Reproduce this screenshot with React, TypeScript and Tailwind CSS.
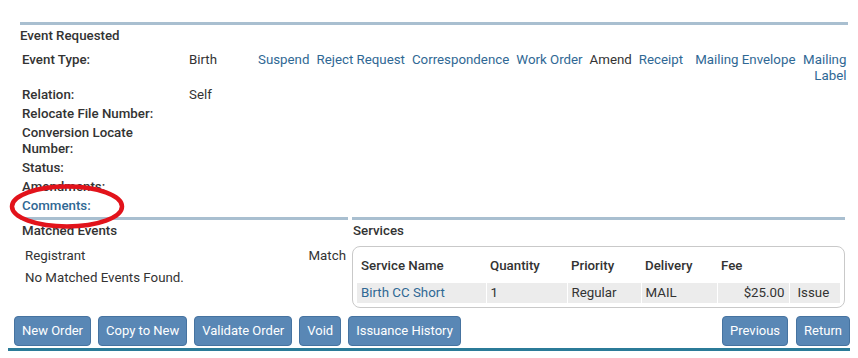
const font = { fontFamily: "Roboto, 'Open Sans', sans-serif" };

function Field({ label, children, link = false }: { label: string; children?: React.ReactNode; link?: boolean }) {
  return (
    <div className="flex">
      <div className={`w-[167px] pr-6 font-medium ${link ? "text-[#2f6894]" : "text-[#333]"}`}>{label}</div>
      <div className="w-[69px]">{children}</div>
    </div>
  );
}

function Btn({ children }: { children: React.ReactNode }) {
  return (
    <button className="h-[30px] rounded-[4px] border border-[#4673a0] bg-[#5987b5] px-[7px] text-[13px] text-white">
      {children}
    </button>
  );
}

export default function App() {
  const links = ["Suspend", "Reject Request", "Correspondence", "Work Order"];
  return (
    <div className="relative h-[358px] w-[858px] overflow-hidden bg-white text-[13.3px] leading-[16px] text-[#333]" style={font}>
      <div className="pt-[22px]">
        <div className="ml-[20px] mr-[10px] border-t-[3px] border-[#a9bfd0] pt-[3px]">
          <div className="font-medium">Event Requested</div>
          <div className="mt-[8px] flex flex-col gap-[3px] pl-[2px]">
            <div className="flex">
              <div className="w-[167px] shrink-0 font-medium">Event Type:</div>
              <div className="w-[69px] shrink-0">Birth</div>
              <div className="flex flex-1 items-start gap-[7px] whitespace-nowrap">
                {links.map((l) => (
                  <span key={l} className="shrink-0 text-[#2f6894]">{l}</span>
                ))}
                <span className="shrink-0">Amend</span>
                <span className="mr-[5px] shrink-0 text-[#2f6894]">Receipt</span>
                <span className="shrink-0 text-[#2f6894]">Mailing Envelope</span>
                <span className="w-[44px] shrink-0 whitespace-normal text-right text-[#2f6894]">Mailing Label</span>
              </div>
            </div>
            <Field label="Relation:">Self</Field>
            <Field label="Relocate File Number:" />
            <Field label="Conversion Locate Number:" />
            <Field label="Status:" />
            <Field label="Amendments:" />
            <Field label="Comments:" link />
          </div>
        </div>

        <div className="mt-[3px] flex gap-[4px] pl-[20px] pr-[13px]">
          <div className="w-[328px] border-t-[3px] border-[#a9bfd0] pt-[3px]">
            <div className="pl-[2px] font-medium">Matched Events</div>
            <div className="mt-[9px] flex justify-between pl-[5px] pr-[2px]">
              <span>Registrant</span>
              <span>Match</span>
            </div>
            <div className="mt-[6px] pl-[5px]">No Matched Events Found.</div>
          </div>
          <div className="flex-1 border-t-[3px] border-[#a9bfd0] pt-[3px]">
            <div className="pl-[1px] font-medium">Services</div>
            <div className="mt-[7px] rounded-[8px] border border-[#c9c9c9] px-[4px] pb-[4px] pt-[11px]">
              <table className="w-full border-collapse">
                <thead>
                  <tr className="text-left">
                    <th className="w-[129px] px-[4px] pb-[9px] font-medium">Service Name</th>
                    <th className="w-[81px] px-[4px] pb-[9px] font-medium">Quantity</th>
                    <th className="w-[74px] px-[4px] pb-[9px] font-medium">Priority</th>
                    <th className="w-[76px] px-[4px] pb-[9px] font-medium">Delivery</th>
                    <th className="w-[72px] px-[4px] pb-[9px] font-medium">Fee</th>
                    <th className="pb-[9px]" />
                  </tr>
                </thead>
                <tbody>
                  <tr className="bg-[#ececec]">
                    <td className="border-r border-white px-[4px] py-[2px] text-[#2f6894]">Birth CC Short</td>
                    <td className="border-r border-white px-[4px] py-[2px]">1</td>
                    <td className="border-r border-white px-[4px] py-[2px]">Regular</td>
                    <td className="border-r border-white px-[4px] py-[2px]">MAIL</td>
                    <td className="border-r border-white px-[4px] py-[2px] text-right">$25.00</td>
                    <td className="px-[8px] py-[2px]">Issue</td>
                  </tr>
                </tbody>
              </table>
            </div>
          </div>
        </div>

        <div className="mx-[8px] mt-[8px] flex justify-between border-b-[3px] border-[#2b7b98] pb-[2px] pl-[6px]">
          <div className="flex gap-[7px]">
            <Btn>New Order</Btn>
            <Btn>Copy to New</Btn>
            <Btn>Validate Order</Btn>
            <Btn>Void</Btn>
            <Btn>Issuance History</Btn>
          </div>
          <div className="flex gap-[8px]">
            <Btn>Previous</Btn>
            <Btn>Return</Btn>
          </div>
        </div>
      </div>

      <svg className="pointer-events-none absolute left-[8px] top-[183px]" width="120" height="48" viewBox="0 0 120 48">
        <ellipse cx="59" cy="23.5" rx="55" ry="20" fill="none" stroke="#e2131b" strokeWidth="4.5" />
      </svg>
    </div>
  );
}
